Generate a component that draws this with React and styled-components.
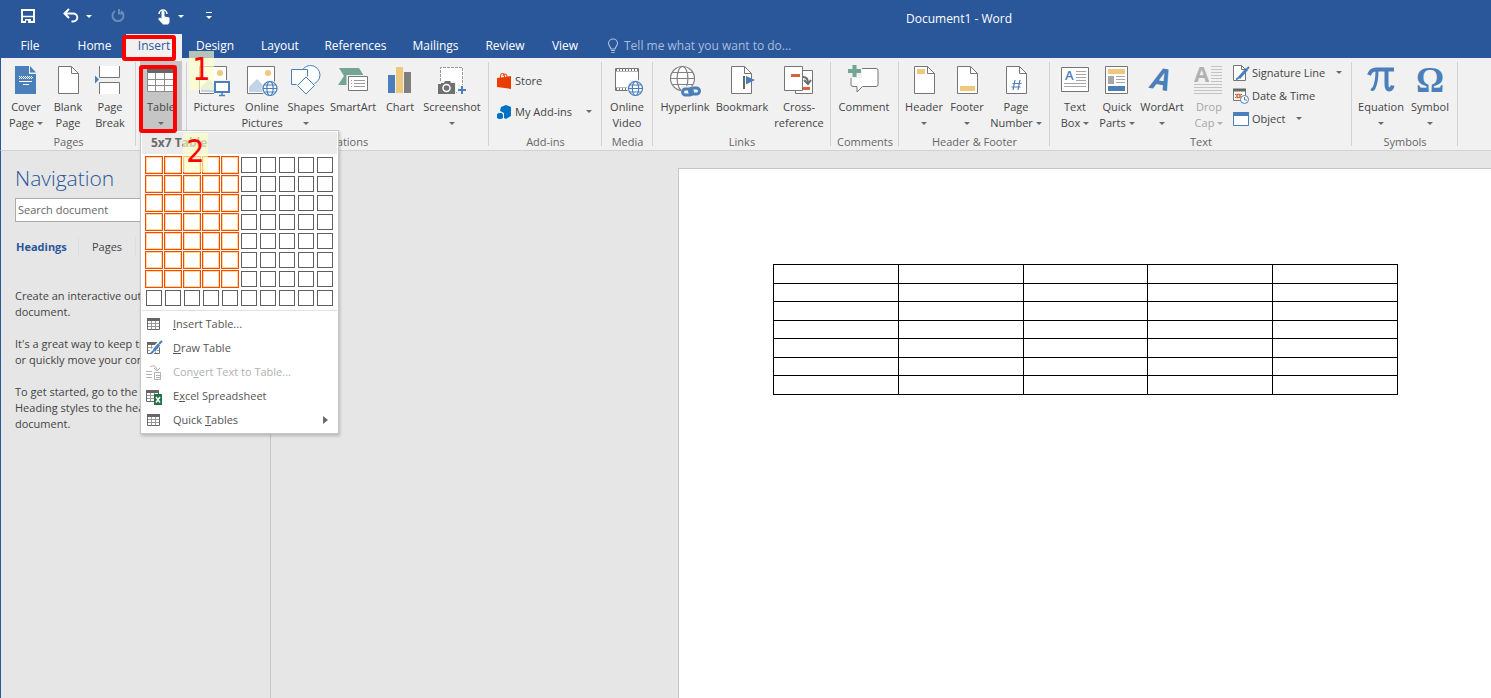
import React from "react";
import styled, { createGlobalStyle, css } from "styled-components";

const BLUE = "#2a579a";
const ACCENT = "#4a7fba";
const GRAY = "#767676";
const SAND = "#efc77d";
const UI = `"Open Sans", "Noto Sans", sans-serif`;

const GlobalStyle = createGlobalStyle`
  *, *::before, *::after { box-sizing: border-box; }
  body { margin: 0; font-family: ${UI}; font-size: 11px; line-height: 16px; color: #444; background: #e6e6e6; overflow: hidden; }
  button, input { font: inherit; color: inherit; }
  p { margin: 0; }
`;

const Window = styled.div`
  display: flex;
  flex-direction: column;
  min-height: 100vh;
`;

const plainButton = css`
  border: 0;
  padding: 0;
  margin: 0;
  background: none;
`;

/* ---------- title bar and tabs ---------- */

const TitleBar = styled.header`
  display: flex;
  height: 34px;
  background: ${BLUE};
  color: #fff;
`;

const QuickAccess = styled.div`
  display: flex;
  align-items: center;
  flex: 0 0 427px;
  height: 32px;
  padding-left: 14px;
`;

const QuickButton = styled.button`
  ${plainButton}
  display: flex;
  align-items: center;
  justify-content: center;
  width: ${(p) => p.$w || 28}px;
  height: 28px;
  margin-left: ${(p) => p.$gap || 0}px;
  opacity: ${(p) => (p.disabled ? 0.3 : 1)};
`;

const DocTitle = styled.h1`
  flex: 1;
  margin: 0;
  padding-top: 3px;
  text-align: center;
  font-size: 12px;
  font-weight: 400;
  line-height: 32px;
  white-space: nowrap;
`;

const TabBar = styled.nav`
  display: flex;
  height: 24px;
  background: ${BLUE};
  color: #fff;
`;

const Tab = styled.button`
  ${plainButton}
  position: relative;
  width: ${(p) => p.$w}px;
  margin-right: ${(p) => (p.$file ? 3 : 0)}px;
  font-size: 12px;
  line-height: 24px;
  color: ${(p) => (p.$active ? BLUE : "#fff")};
  background: ${(p) => (p.$active ? "#f1f1f1" : "none")};
`;

const TellMe = styled.button`
  ${plainButton}
  display: flex;
  align-items: center;
  gap: 3px;
  margin-left: 13px;
  font-size: 12px;
  color: #a9bddb;
`;

/* ---------- ribbon ---------- */

const Ribbon = styled.section`
  display: flex;
  height: 93px;
  border-left: 1px solid ${BLUE};
  border-bottom: 1px solid #d2d2d2;
  background: #f1f1f1;
`;

const Group = styled.div`
  position: relative;
  display: flex;
  flex-direction: column;
  flex: none;
  width: ${(p) => p.$w}px;
  padding-top: 3px;

  &::after {
    content: "";
    position: absolute;
    right: 0;
    top: 4px;
    bottom: 4px;
    width: 1px;
    background: #d2d2d2;
  }
`;

const GroupBody = styled.div`
  position: relative;
  display: flex;
  height: 70px;
  padding-left: ${(p) => p.$pad ?? 3}px;
`;

const GroupName = styled.div`
  padding-top: 3px;
  text-align: center;
  color: #666;
`;

const BigButton = styled.button`
  ${plainButton}
  display: flex;
  flex-direction: column;
  align-items: center;
  flex: none;
  width: ${(p) => p.$w}px;
  padding-top: 4px;
  white-space: nowrap;
  color: ${(p) => (p.disabled ? "#a6a6a6" : "#444")};
  background: ${(p) => (p.$open ? "#c5c5c5" : "none")};

  svg { flex: none; }
`;

const ButtonText = styled.span`
  display: flex;
  flex-direction: column;
  align-items: center;
  padding-top: 2px;
`;

const TextLine = styled.span`
  display: flex;
  align-items: center;
  justify-content: center;
  gap: 3px;
  height: 16px;
`;

const Caret = styled.span`
  width: 0;
  height: 0;
  border: 3px solid transparent;
  border-top-color: currentColor;
  border-bottom: 0;
  color: ${(p) => p.$color || "#6a6a6a"};
`;

const Stack = styled.div`
  display: flex;
  flex-direction: column;
  padding: ${(p) => (p.$tall ? "4px 0 0 5px" : "0 0 0 2px")};
`;

const SmallButton = styled.button`
  ${plainButton}
  display: flex;
  align-items: center;
  gap: ${(p) => (p.$tall ? 2 : 3)}px;
  height: ${(p) => (p.$tall ? 31 : 23)}px;
  white-space: nowrap;

  ${Caret} { margin-left: ${(p) => (p.$tall ? 12 : 8)}px; }
`;

/* ---------- table menu ---------- */

const TableMenu = styled.div`
  position: absolute;
  z-index: 2;
  left: 4px;
  top: 69px;
  width: 199px;
  padding: 1px;
  border: 1px solid #c6c6c6;
  background: #fff;
  box-shadow: 1px 2px 3px rgba(0, 0, 0, 0.2);
`;

const MenuTitle = styled.div`
  height: 22px;
  padding-left: 9px;
  font-size: 12px;
  font-weight: 700;
  line-height: 22px;
  color: #6a6a6a;
  background: #ebebeb;
`;

const SizeGrid = styled.div`
  display: grid;
  grid-template-columns: repeat(10, 18px);
  grid-auto-rows: 18px;
  gap: 1px;
  padding: 2px 3px 3px;
  border-bottom: 1px solid #e1e1e1;
`;

const SizeCell = styled.button`
  ${plainButton}
  margin: ${(p) => (p.$on ? 0 : 1)}px;
  border: 1px solid ${(p) => (p.$on ? "#ef4a12" : "#5f5f5f")};
  box-shadow: ${(p) => (p.$on ? "inset 0 0 0 1px #fbdc8c" : "none")};
`;

const MenuItems = styled.div`
  padding-top: 1px;
`;

const MenuItem = styled.button`
  ${plainButton}
  display: flex;
  align-items: center;
  width: 100%;
  height: 24px;
  padding: 0 9px 0 3px;
  color: ${(p) => (p.disabled ? "#b1b1b1" : "#555")};

  svg { flex: none; }
  u { text-underline-offset: 1px; }
`;

const MenuText = styled.span`
  flex: 1;
  padding-left: 11px;
  text-align: left;
  white-space: nowrap;
`;

/* ---------- call-outs ---------- */

const Outline = styled.span`
  position: absolute;
  z-index: 3;
  border: 4px solid #f00;
  border-radius: 3px;
  pointer-events: none;
`;

const TabOutline = styled(Outline)`
  left: -4px;
  top: 1px;
  width: 54px;
  height: 26px;
`;

const ButtonOutline = styled(Outline)`
  left: 3px;
  top: 4px;
  width: 38px;
  height: 68px;
`;

const StepNumber = styled.span`
  position: absolute;
  z-index: 4;
  left: ${(p) => p.$x}px;
  top: ${(p) => p.$y}px;
  width: 25px;
  height: 39px;
  font-family: "DejaVu Sans Condensed", "DejaVu Sans", sans-serif;
  font-size: 32px;
  line-height: 37px;
  text-align: center;
  color: #f00;
  background: rgba(255, 255, 200, 0.65);
`;

/* ---------- work area ---------- */

const WorkArea = styled.div`
  display: flex;
  flex: 1;
  border-left: 1px solid ${BLUE};
`;

const NavPane = styled.aside`
  flex: none;
  width: 270px;
  padding: 12px 14px 0;
  border-right: 1px solid #c6c6c6;
  overflow: hidden;
`;

const NavTitle = styled.h2`
  margin: 0 0 5px;
  font-size: 21px;
  font-weight: 300;
  line-height: 30px;
  color: ${BLUE};
`;

const SearchBox = styled.input`
  display: block;
  width: 100%;
  height: 24px;
  padding: 0 2px 2px;
  border: 1px solid #ababab;
  border-radius: 0;
  background: #fff;

  &::placeholder { color: #666; opacity: 1; }
`;

const NavTabs = styled.div`
  display: flex;
  height: 20px;
  margin: 15px 0 31px;
`;

const NavTab = styled.button`
  ${plainButton}
  width: ${(p) => (p.$active ? 64 : 57)}px;
  padding-left: ${(p) => (p.$active ? 1 : 0)}px;
  text-align: ${(p) => (p.$active ? "left" : "center")};
  border-right: 1px solid #dedede;
  font-weight: ${(p) => (p.$active ? 700 : 400)};
  color: ${(p) => (p.$active ? BLUE : "#444")};
`;

const Hint = styled.p`
  margin-bottom: 16px;
  white-space: nowrap;
`;

const Canvas = styled.main`
  display: flex;
  flex: 1;
  padding: 17px 0 0 407px;
`;

const Page = styled.article`
  flex: 1;
  padding: 95px 93px 0 94px;
  border: solid #c6c6c6;
  border-width: 1px 0 0 1px;
  background: #fff;
`;

const DocTable = styled.table`
  width: 100%;
  table-layout: fixed;
  border-collapse: separate;
  border-spacing: 0;
  border: solid #000;
  border-width: 1px 0 0 1px;

  td {
    height: 19px;
    padding: 0;
    border: solid #000;
    border-width: 0 1px 1px 0;
  }
  tr:nth-child(even) td { height: 18px; }
`;

/* ---------- icons ---------- */

const Icon = ({ size = 32, children }) => (
  <svg width={size} height={size} viewBox={`0 0 ${size} ${size}`} fill="none" overflow="visible" aria-hidden="true">
    {children}
  </svg>
);

const Sheet = () => (
  <>
    <path d="M6.5 1.5h13l7 7v20h-20z" fill="#fff" stroke={GRAY} />
    <path d="M19.5 1.5v7h7" stroke={GRAY} />
  </>
);

const Globe = ({ cx, cy, r, color = ACCENT }) => (
  <g stroke={color} strokeWidth="1.2">
    <circle cx={cx} cy={cy} r={r} fill="#fff" />
    <ellipse cx={cx} cy={cy} rx={r * 0.45} ry={r} />
    <path d={`M${cx - r} ${cy}h${2 * r}M${cx - r * 0.87} ${cy - r / 2}h${r * 1.74}M${cx - r * 0.87} ${cy + r / 2}h${r * 1.74}`} />
  </g>
);

const Photo = () => (
  <>
    <path d="M1.5 1.5h27v27h-27z" fill="#fff" stroke={GRAY} />
    <circle cx="22" cy="8" r="3" fill={SAND} />
    <path d="M3 27v-5l8-8 8 8v5z" fill="#c3d4e8" />
  </>
);

const CoverIcon = () => (
  <Icon>
    <path d="M5 1h14v8h7v20H5z" fill={ACCENT} />
    <path d="M20 1l6 6.500h-6z" fill={ACCENT} />
    <path d="M9 11.500h14M9 13.500h14" stroke="#fff" strokeDasharray="1 1" />
    <path d="M10 12.500h13" stroke="#fff" strokeDasharray="1 1" />
    <path d="M9 16.500h13M13 19.500h6" stroke="#fff" />
  </Icon>
);
const BlankIcon = () => <Icon><Sheet /></Icon>;
const BreakIcon = () => (
  <Icon>
    <path d="M5.500 1v11.500h20V1" fill="#fff" stroke={GRAY} />
    <path d="M5.500 29V17.500h20V29" fill="#fff" stroke={GRAY} />
    <path d="M1 10.500l4 4-4 4z" fill={ACCENT} />
  </Icon>
);
const TableIcon = () => (
  <Icon>
    <path d="M2 4h27v23H2z" fill="#fff" />
    <path d="M2 4h27v4H2z" fill="#666" />
    <path d="M2.500 7v19.500h26V7M2 14.500h27M2 20.500h27M10.500 8v18M19.500 8v18" stroke="#8a8a8a" />
  </Icon>
);
const PicturesIcon = () => (
  <Icon>
    <Photo />
    <path d="M16 15h16v15H16z" fill="#f1f1f1" />
    <path d="M17 17h14v10H17z" fill="#fff" stroke={ACCENT} strokeWidth="2" />
    <path d="M24 28v2M21 30.500h6" stroke={ACCENT} strokeWidth="1.500" />
  </Icon>
);
const OnlinePicturesIcon = () => (
  <Icon>
    <Photo />
    <circle cx="24" cy="23.500" r="8.500" fill="#f1f1f1" />
    <Globe cx={24} cy={23.5} r={7} />
  </Icon>
);
const ShapesIcon = () => (
  <Icon>
    <circle cx="20.500" cy="10" r="9.500" fill="#fff" stroke={ACCENT} />
    <path d="M1.500 4.500h16v15h-16z" fill="#fff" stroke={ACCENT} />
    <path d="M16 10l10.500 10.500L16 31 5.500 20.500z" fill="#f1f1f1" />
    <path d="M16 12l8.500 8.500L16 29l-8.500-8.500z" fill="#fff" stroke={ACCENT} />
  </Icon>
);
const SmartArtIcon = () => (
  <Icon>
    <path d="M2 3h20l5 8-5 9H1l6-9z" fill="#74a493" />
    <path d="M9.500 10h22v17h-22z" fill="#f1f1f1" />
    <path d="M11.500 11.500h19v14h-19z" fill="#fff" stroke={GRAY} />
    <path d="M14 15.500h1M17 15.500h11M14 18.500h1M17 18.500h11M14 21.500h1M17 21.500h11" stroke="#999" />
  </Icon>
);
const ChartIcon = () => (
  <Icon>
    <path d="M4 10h7v18H4z" fill={ACCENT} />
    <path d="M12 2h7v26h-7z" fill={SAND} />
    <path d="M20 7h7v21h-7z" fill="#7f7f7f" />
  </Icon>
);
const ScreenshotIcon = () => (
  <Icon>
    <path d="M4.500 2.500h23v25h-23z" fill="#fff" />
    <path d="M4.500 16V2.500h22V20M19 27.500h2" stroke="#999" strokeDasharray="3 1" />
    <path d="M1 16h19v13H1z" fill="#f1f1f1" />
    <path d="M22 20h10v10H22z" fill="#f1f1f1" />
    <path d="M2 19h3v-1h3l1-2h5l1 2h4v11H2z" fill="#707070" />
    <circle cx="10.500" cy="23" r="3.500" stroke="#fff" strokeWidth="1.500" />
    <path d="M26 21v8M22 25h8" stroke={ACCENT} strokeWidth="2" />
  </Icon>
);
const StoreIcon = () => (
  <Icon size={16}>
    <path d="M0 5l14-2v13L0 14z" fill="#eb3c00" />
    <path d="M3.500 5V2.500a2 2 0 014 0V4M6 3a2 2 0 014 0v1" stroke="#eb3c00" />
  </Icon>
);
const AddinsIcon = () => (
  <Icon size={16}>
    <path d="M4 3l5-2 5 2v9l-5 3-2-1V9L3 7z" fill="#0072c6" />
    <path d="M0 10l2-1h3l1 2v3l-2 1H2l-2-1z" fill="#0072c6" />
  </Icon>
);
const VideoIcon = () => (
  <Icon>
    <path d="M4.500 3.500h23v22h-23z" fill="#fff" stroke={GRAY} />
    <path d="M5 5h22M5 24h22" stroke={GRAY} strokeWidth="3" />
    <path d="M6 5h21M6 24h21" stroke="#fff" strokeWidth="2" strokeDasharray="2 1" />
    <circle cx="24.500" cy="23" r="8.500" fill="#f1f1f1" />
    <Globe cx={24.5} cy={23.5} r={7} />
  </Icon>
);
const LinkIcon = () => (
  <Icon>
    <Globe cx={13.5} cy={13.5} r={12} color="#828282" />
    <path d="M12 21h20v11H12z" fill="#f1f1f1" />
    <g stroke={ACCENT} strokeWidth="3">
      <rect x="13.500" y="24" width="10" height="6" rx="3" />
      <rect x="20.500" y="23" width="10" height="6" rx="3" />
    </g>
  </Icon>
);
const BookmarkIcon = () => (
  <Icon>
    <path d="M5.500 1.500h13l7 7v20h-20z" fill="#fff" stroke={GRAY} />
    <path d="M18.500 1.500v7h7" stroke={GRAY} />
    <path d="M18 11v13" stroke="#666" strokeWidth="2" />
    <path d="M20 11l9 4-9 4.500z" fill={ACCENT} />
  </Icon>
);
const CrossIcon = () => (
  <Icon>
    <path d="M12.500 5.500h17v23h-17z" fill="#fff" stroke={GRAY} />
    <path d="M1.500 1.500h18v24h-18z" fill="#fff" stroke={GRAY} />
    <path d="M8 10.500h9M20 23.500h7" stroke="#d9603f" strokeWidth="3" />
    <path d="M20 12c4 0 5 3 5 6" stroke="#6a6a6a" strokeWidth="2" />
    <path d="M21 15l4 4 3-4" stroke="#6a6a6a" strokeWidth="2" />
  </Icon>
);
const CommentIcon = () => (
  <Icon>
    <path d="M5 3.500h23q2 0 2 2v14q0 2-2 2H14.500L9 27v-5.500H5q-2 0-2-2v-14q0-2 2-2z" fill="#fff" stroke={GRAY} />
    <path d="M0 0h14v13H0z" fill="#f1f1f1" />
    <path d="M6.500 0v12M0 6h13" stroke="#74a493" strokeWidth="4" />
  </Icon>
);
const HeaderIcon = () => <Icon><Sheet /><path d="M9 4h8v5H9z" fill={SAND} /></Icon>;
const FooterIcon = () => <Icon><Sheet /><path d="M9 21h15v5H9z" fill={SAND} /></Icon>;
const NumberIcon = () => (
  <Icon><Sheet /><path d="M15 15l-2 10M20 15l-2 10M12.500 18.500h9M11.500 22h9" stroke={ACCENT} strokeWidth="1.200" /></Icon>
);
const TextBoxIcon = () => (
  <Icon>
    <path d="M2.500 2.500h27v24h-27z" fill="#fff" stroke={GRAY} />
    <text x="6" y="15" fontFamily="Open Sans" fontSize="13" fontWeight="600" fill={ACCENT}>A</text>
    <path d="M17 6.500h10M17 9.500h10M17 12.500h10M17 15.500h10M5 18.500h22M5 21.500h22" stroke="#a6a6a6" />
  </Icon>
);
const QuickPartsIcon = () => (
  <Icon>
    <path d="M4.500 1.500h22v27h-22z" fill="#fff" stroke={GRAY} />
    <path d="M7 4h17v5H7z" fill={SAND} />
    <path d="M7 11h6v8H7z" fill="#a6a6a6" />
    <path d="M15 11.500h9M15 14.500h9M15 17.500h9" stroke="#a6a6a6" />
    <path d="M7 21h17v5H7z" fill={ACCENT} />
  </Icon>
);
const WordArtIcon = () => (
  <Icon>
    <text x="4" y="23" transform="rotate(10 4 23)" fontFamily="Open Sans" fontSize="30" fontStyle="italic" fontWeight="700" fill={ACCENT}>A</text>
  </Icon>
);
const DropCapIcon = () => (
  <Icon>
    <text x="1" y="17" fontFamily="Open Sans" fontSize="22" fontWeight="700" fill="#b1b1b1">A</text>
    <path d="M18 1.500h11M18 4.500h11M18 7.500h11M18 10.500h11M18 13.500h11M18 16.500h11M1 19.500h28M1 22.500h28M1 25.500h28M1 28.500h28" stroke="#c3c3c3" />
  </Icon>
);
const PiIcon = () => (
  <Icon>
    <g stroke={ACCENT}>
      <path d="M4 10q2-5.500 7-5.500h18" strokeWidth="4" />
      <path d="M12 5c0 9-1 14-3 18q-1 2-3 1" strokeWidth="3" />
      <path d="M21.500 5v14q0 6 3 5.500 2.500-.5 3-4" strokeWidth="4" />
    </g>
  </Icon>
);
const OmegaIcon = () => (
  <Icon>
    <text x="16" y="27" textAnchor="middle" fontFamily="Liberation Serif" fontSize="35" fontWeight="700" fill={ACCENT}>Ω</text>
  </Icon>
);
const SignatureIcon = () => (
  <Icon size={16}>
    <path d="M.5.500h8l4 4v11H.500z" fill="#fff" stroke={GRAY} />
    <path d="M8.500.500v4h4" stroke={GRAY} />
    <path d="M6 13l8-9" stroke={ACCENT} strokeWidth="3" />
    <path d="M14 4l2-2M3 14.500l3-2" stroke={ACCENT} strokeWidth="2" />
  </Icon>
);
const DateIcon = () => (
  <Icon size={16}>
    <path d="M.5 1.500h12v11H.500z" fill="#fff" stroke={GRAY} />
    <path d="M0 2h13" stroke="#666" strokeWidth="3" />
    <path d="M2 6.500h9M2 9.500h3" stroke={GRAY} strokeDasharray="1 2" />
    <path d="M4 6.500h3v3H4z" stroke="#dc6a28" strokeWidth="1.500" />
    <circle cx="11.500" cy="11.500" r="4" fill="#fff" stroke={ACCENT} />
    <path d="M11.500 9v3H14" stroke={GRAY} />
  </Icon>
);
const ObjectIcon = () => (
  <Icon size={16}>
    <path d="M.5 1.500h15v13H.500z" fill="#fff" stroke={ACCENT} />
    <path d="M0 3h16" stroke={ACCENT} strokeWidth="4" />
  </Icon>
);

const MiniTable = ({ shift = 1 }) => (
  <g transform={`translate(${shift} 2)`}>
    <path d="M.5.500h12v11H.500z" fill="#fff" stroke="#6a6a6a" />
    <path d="M0 1.500h13" stroke="#666" strokeWidth="3" />
    <path d="M1 5.500h11M1 8.500h11M4.500 3v8M8.500 3v8" stroke="#9a9a9a" />
  </g>
);
const GridIcon = () => <Icon size={17}><MiniTable shift={2} /></Icon>;
const DrawTableIcon = () => (
  <Icon size={17}>
    <MiniTable shift={2} />
    <path d="M6 13l9-10" stroke="#fff" strokeWidth="5" />
    <path d="M9 10.500l5-6" stroke={ACCENT} strokeWidth="3" />
    <path d="M14 4l3-3M6 13.500l3-3" stroke={ACCENT} strokeWidth="2" />
  </Icon>
);
const ConvertIcon = () => (
  <Icon size={17}>
    <path d="M1 7.500h6M1 10.500h6M1 13.500h6M5 3c4-3 7 0 7 4M9 4l3 3 3-3" stroke="#b1b1b1" />
    <path d="M9.500 8.500h6v7h-6zM11 11.500h4M11 13.500h4" stroke="#b1b1b1" />
  </Icon>
);
const ExcelIcon = () => (
  <Icon size={17}>
    <MiniTable shift={1} />
    <path d="M9 6h8v11H9z" fill="#217346" />
    <path d="M11 9l4 5.500M15 9l-4 5.500" stroke="#fff" strokeWidth="1.500" />
  </Icon>
);

const SaveIcon = () => (
  <Icon size={16}>
    <path d="M2 2h12v12H2z" stroke="#fff" strokeWidth="2" />
    <path d="M2 8.500h12" stroke="#fff" strokeWidth="1.500" />
    <path d="M5 11h6v4H5z" fill="#fff" />
    <path d="M6 12.500h2V15H6z" fill={BLUE} />
  </Icon>
);
const UndoIcon = () => (
  <Icon size={16}>
    <path d="M1.500 5.500H10a4 3.700 0 010 8H8.500M6 1L1.500 5.500 6 10" stroke="#fff" strokeWidth="2" />
  </Icon>
);
const RedoIcon = () => (
  <Icon size={16}>
    <path d="M5 3a5.500 5.500 0 106 0M9 1v4.500h5" stroke="#fff" strokeWidth="2" />
  </Icon>
);
const TouchIcon = () => (
  <Icon size={18}>
    <path d="M4 7a4 4 0 118 0" stroke="#fff" strokeWidth="1.500" />
    <path d="M6.500 5a1.500 1.500 0 013 0v4.500l5 1v5l-1.500 2H8L3 12l2-1.500 1.500 1z" fill="#fff" />
  </Icon>
);
const CustomizeIcon = () => (
  <Icon size={8}>
    <path d="M1 .5h6" stroke="#fff" />
    <path d="M1 4h6L4 7z" fill="#fff" />
  </Icon>
);
const BulbIcon = () => (
  <Icon size={16}>
    <path d="M6 11c0-2-2.500-3-2.500-5.500a4.500 4.500 0 019 0C12.500 8 10 9 10 11zM6 12.500h4M6.500 14.500h3" stroke="#a9bddb" strokeWidth="1.200" />
  </Icon>
);
const SubmenuArrow = () => (
  <svg width="5" height="8" viewBox="0 0 5 8" aria-hidden="true">
    <path d="M0 0l5 4-5 4z" fill="#6a6a6a" />
  </svg>
);

/* ---------- data ---------- */

const tabs = [
  ["File", 60], ["Home", 63], ["Insert", 56], ["Design", 66], ["Layout", 64],
  ["References", 87], ["Mailings", 73], ["Review", 66], ["View", 54],
];

const hints = [
  ["Create an interactive outline of your", "document."],
  ["It's a great way to keep track of where you are", "or quickly move your content around."],
  ["To get started, go to the Home tab and apply", "Heading styles to the headings in your", "document."],
];

const Big = ({ icon: Glyph, w, lines, caret, open, disabled }) => (
  <BigButton $w={w} $open={open} disabled={disabled}>
    <Glyph />
    <ButtonText>
      {lines.map((line, i) => (
        <TextLine key={line}>
          {line}
          {caret && i === 1 && <Caret $color={disabled ? "#b1b1b1" : undefined} />}
        </TextLine>
      ))}
      {caret && lines.length === 1 && <TextLine><Caret /></TextLine>}
    </ButtonText>
  </BigButton>
);

const Small = ({ icon: Glyph, text, caret, tall }) => (
  <SmallButton $tall={tall}>
    <Glyph />
    {text}
    {caret && <Caret />}
  </SmallButton>
);

const RibbonGroup = ({ name, w, pad, children }) => (
  <Group $w={w}>
    <GroupBody $pad={pad}>{children}</GroupBody>
    <GroupName>{name}</GroupName>
  </Group>
);

const TableDropdown = () => (
  <TableMenu>
    <MenuTitle>5x7 Table</MenuTitle>
    <SizeGrid>
      {Array.from({ length: 80 }, (_, i) => {
        const col = (i % 10) + 1;
        const row = Math.floor(i / 10) + 1;
        return <SizeCell key={i} $on={col <= 5 && row <= 7} aria-label={`${col} by ${row}`} />;
      })}
    </SizeGrid>
    <MenuItems>
      <MenuItem><GridIcon /><MenuText><u>I</u>nsert Table...</MenuText></MenuItem>
      <MenuItem><DrawTableIcon /><MenuText><u>D</u>raw Table</MenuText></MenuItem>
      <MenuItem disabled><ConvertIcon /><MenuText>Con<u>v</u>ert Text to Table...</MenuText></MenuItem>
      <MenuItem><ExcelIcon /><MenuText>E<u>x</u>cel Spreadsheet</MenuText></MenuItem>
      <MenuItem><GridIcon /><MenuText>Quick <u>T</u>ables</MenuText><SubmenuArrow /></MenuItem>
    </MenuItems>
  </TableMenu>
);

export default function App() {
  return (
    <Window>
      <GlobalStyle />
      <TitleBar>
        <QuickAccess>
          <QuickButton aria-label="Save"><SaveIcon /></QuickButton>
          <QuickButton $gap={15} aria-label="Undo"><UndoIcon /></QuickButton>
          <QuickButton $w={8} aria-label="Undo list"><Caret $color="#fff" /></QuickButton>
          <QuickButton $gap={11} disabled aria-label="Redo"><RedoIcon /></QuickButton>
          <QuickButton $gap={18} aria-label="Touch mode"><TouchIcon /></QuickButton>
          <QuickButton $w={6} aria-label="Touch mode list"><Caret $color="#fff" /></QuickButton>
          <QuickButton $gap={11} aria-label="Customize"><CustomizeIcon /></QuickButton>
        </QuickAccess>
        <DocTitle>Document1 - Word</DocTitle>
      </TitleBar>
      <TabBar>
        {tabs.map(([name, w]) => (
          <Tab key={name} $w={w} $file={name === "File"} $active={name === "Insert"}>
            {name}
            {name === "Insert" && <TabOutline />}
          </Tab>
        ))}
        <TellMe><BulbIcon />Tell me what you want to do...</TellMe>
      </TabBar>

      <Ribbon>
        <RibbonGroup name="Pages" w={135} pad={4}>
          <Big icon={CoverIcon} w={42} lines={["Cover", "Page"]} caret />
          <Big icon={BlankIcon} w={42} lines={["Blank", "Page"]} />
          <Big icon={BreakIcon} w={42} lines={["Page", "Break"]} />
        </RibbonGroup>
        <RibbonGroup name="Tables" w={51} pad={4}>
          <Big icon={TableIcon} w={42} lines={["Table"]} caret open />
          <ButtonOutline />
          <TableDropdown />
          <StepNumber $x={53} $y={-10}>1</StepNumber>
          <StepNumber $x={47} $y={72}>2</StepNumber>
        </RibbonGroup>
        <RibbonGroup name="Illustrations" w={302}>
          <Big icon={PicturesIcon} w={48} lines={["Pictures"]} />
          <Big icon={OnlinePicturesIcon} w={48} lines={["Online", "Pictures"]} />
          <Big icon={ShapesIcon} w={40} lines={["Shapes"]} caret />
          <Big icon={SmartArtIcon} w={54} lines={["SmartArt"]} />
          <Big icon={ChartIcon} w={40} lines={["Chart"]} />
          <Big icon={ScreenshotIcon} w={64} lines={["Screenshot"]} caret />
        </RibbonGroup>
        <RibbonGroup name="Add-ins" w={113}>
          <Stack $tall>
            <Small icon={StoreIcon} text="Store" tall />
            <Small icon={AddinsIcon} text="My Add-ins" caret tall />
          </Stack>
        </RibbonGroup>
        <RibbonGroup name="Media" w={51} pad={0}>
          <Big icon={VideoIcon} w={50} lines={["Online", "Video"]} />
        </RibbonGroup>
        <RibbonGroup name="Links" w={178}>
          <Big icon={LinkIcon} w={58} lines={["Hyperlink"]} />
          <Big icon={BookmarkIcon} w={56} lines={["Bookmark"]} />
          <Big icon={CrossIcon} w={58} lines={["Cross-", "reference"]} />
        </RibbonGroup>
        <RibbonGroup name="Comments" w={68}>
          <Big icon={CommentIcon} w={60} lines={["Comment"]} />
        </RibbonGroup>
        <RibbonGroup name="Header & Footer" w={151}>
          <Big icon={HeaderIcon} w={44} lines={["Header"]} caret />
          <Big icon={FooterIcon} w={42} lines={["Footer"]} caret />
          <Big icon={NumberIcon} w={56} lines={["Page", "Number"]} caret />
        </RibbonGroup>
        <RibbonGroup name="Text" w={302}>
          <Big icon={TextBoxIcon} w={44} lines={["Text", "Box"]} caret />
          <Big icon={QuickPartsIcon} w={40} lines={["Quick", "Parts"]} caret />
          <Big icon={WordArtIcon} w={50} lines={["WordArt"]} caret />
          <Big icon={DropCapIcon} w={44} lines={["Drop", "Cap"]} caret disabled />
          <Stack>
            <Small icon={SignatureIcon} text="Signature Line" caret />
            <Small icon={DateIcon} text="Date & Time" />
            <Small icon={ObjectIcon} text="Object" caret />
          </Stack>
        </RibbonGroup>
        <RibbonGroup name="Symbols" w={106}>
          <Big icon={PiIcon} w={52} lines={["Equation"]} caret />
          <Big icon={OmegaIcon} w={46} lines={["Symbol"]} caret />
        </RibbonGroup>
      </Ribbon>

      <WorkArea>
        <NavPane>
          <NavTitle>Navigation</NavTitle>
          <SearchBox type="text" placeholder="Search document" aria-label="Search document" />
          <NavTabs>
            <NavTab $active>Headings</NavTab>
            <NavTab>Pages</NavTab>
          </NavTabs>
          {hints.map((lines) => (
            <Hint key={lines[0]}>
              {lines.map((line, i) => (
                <React.Fragment key={line}>
                  {i > 0 && <br />}
                  {line}
                </React.Fragment>
              ))}
            </Hint>
          ))}
        </NavPane>
        <Canvas>
          <Page>
            <DocTable>
              <tbody>
                {Array.from({ length: 7 }, (_, r) => (
                  <tr key={r}>
                    {Array.from({ length: 5 }, (_, c) => <td key={c} />)}
                  </tr>
                ))}
              </tbody>
            </DocTable>
          </Page>
        </Canvas>
      </WorkArea>
    </Window>
  );
}
